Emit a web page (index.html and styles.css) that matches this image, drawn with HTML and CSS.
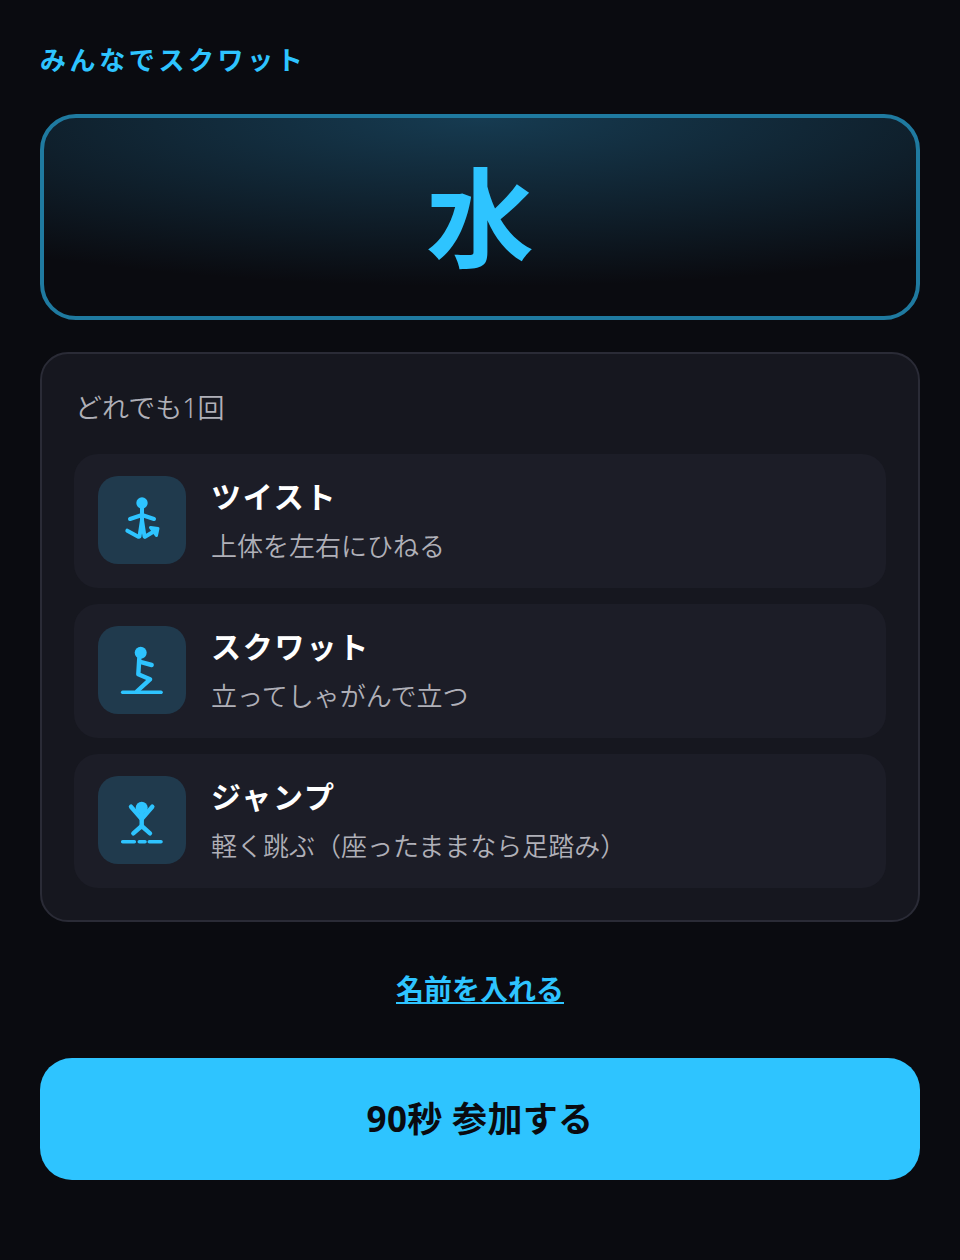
FILE: index.html
```html
<!DOCTYPE html>
<html lang="ja">
<head>
    <meta charset="UTF-8">
    <meta name="viewport" content="width=device-width, initial-scale=1.0">
    <title>みんなでスクワット</title>
    <link rel="stylesheet" href="styles.css">
</head>
<body>
    <main class="page">
        <p class="eyebrow">みんなでスクワット</p>

        <div class="day-card">
            <span class="day-kanji">水</span>
        </div>

        <section class="menu-card">
            <p class="menu-label">どれでも1回</p>

            <div class="move">
                <div class="move-icon">
                    <svg viewBox="0 0 48 48" width="48" height="48" fill="none" stroke="#2ec4ff" stroke-width="4" stroke-linecap="round" stroke-linejoin="round">
                        <circle cx="24" cy="7" r="5.700" fill="#2ec4ff" stroke="none"/>
                        <path d="M24 11v13"/>
                        <path d="M12 23l12-4 12 4"/>
                        <path d="M24 24l-2.500 16.500M24 24l2.500 16.500"/>
                        <path d="M9.300 34.700l11 6"/>
                        <path d="M27 40.700l11.700-7"/>
                        <path d="M32.500 31.500l7.500 1-1.500 7z" fill="#2ec4ff" stroke-width="3"/>
                    </svg>
                </div>
                <div class="move-text">
                    <h3 class="move-name">ツイスト</h3>
                    <p class="move-desc">上体を左右にひねる</p>
                </div>
            </div>

            <div class="move">
                <div class="move-icon">
                    <svg viewBox="0 0 48 48" width="48" height="48" fill="none" stroke="#2ec4ff" stroke-width="4.400" stroke-linecap="round" stroke-linejoin="round">
                        <circle cx="22.700" cy="6.700" r="6" fill="#2ec4ff" stroke="none"/>
                        <path d="M21.300 12l-1 16.300 11.700 5-12.700 11.700"/>
                        <path d="M21.300 15.700l12.400 3.300"/>
                        <path d="M4.700 46.300h38.300" stroke-width="3.600"/>
                    </svg>
                </div>
                <div class="move-text">
                    <h3 class="move-name">スクワット</h3>
                    <p class="move-desc">立ってしゃがんで立つ</p>
                </div>
            </div>

            <div class="move">
                <div class="move-icon">
                    <svg viewBox="0 0 48 48" width="48" height="48" fill="none" stroke="#2ec4ff" stroke-width="4.400" stroke-linecap="round" stroke-linejoin="round">
                        <circle cx="23.700" cy="11.700" r="6" fill="#2ec4ff" stroke="none"/>
                        <path d="M13 10.700l10.700 12.300 10.600-12.300"/>
                        <path d="M23.700 16v14.700"/>
                        <path d="M15.300 37.300l8.400-7.300 8.300 7.300"/>
                        <path d="M4.700 45.700h11.600M21.300 45.700h5.700M31.300 45.700h11.700" stroke-width="3.600"/>
                    </svg>
                </div>
                <div class="move-text">
                    <h3 class="move-name">ジャンプ</h3>
                    <p class="move-desc">軽く跳ぶ（座ったままなら足踏み）</p>
                </div>
            </div>
        </section>

        <a class="name-link" href="#">名前を入れる</a>

        <button class="join-btn" type="button">90秒 参加する</button>
    </main>
</body>
</html>
```

FILE: styles.css
```css
* {
    box-sizing: border-box;
}

body {
    margin: 0;
    background-color: #0a0b10;
    font-family: 'Noto Sans', 'Noto Sans CJK JP', sans-serif;
    color: #ffffff;
}

.page {
    display: flex;
    flex-direction: column;
    height: 1260px;
    padding: 40px;
}

.eyebrow {
    margin: 0;
    height: 40px;
    color: #2ec4ff;
    font-size: 26px;
    font-weight: 700;
    line-height: 40px;
    letter-spacing: 3.6px;
}

.day-card {
    display: flex;
    align-items: center;
    justify-content: center;
    height: 206px;
    margin-top: 34px;
    padding-top: 2px;
    border: 4px solid #1f7aa0;
    border-radius: 36px;
    background: radial-gradient(ellipse 90% 85% at 50% 0%, #163b51 0%, #0a0b10 100%);
}

.day-kanji {
    color: #2ec4ff;
    font-size: 108px;
    font-weight: 700;
    line-height: 1;
}

.menu-card {
    display: flex;
    flex-direction: column;
    gap: 16px;
    height: 570px;
    margin-top: 32px;
    padding: 32px;
    border: 2px solid #2a2b36;
    border-radius: 28px;
    background-color: #16171f;
}

.menu-label {
    margin: 0 0 12px 1px;
    padding-top: 2px;
    height: 40px;
    color: #b0b0b8;
    font-size: 27px;
    font-weight: 350;
    line-height: 40px;
}

.move {
    display: flex;
    align-items: flex-start;
    gap: 25px;
    height: 134px;
    padding: 22px 24px 24px;
    border-radius: 24px;
    background-color: #1c1d27;
}

.move-icon {
    display: flex;
    align-items: center;
    justify-content: center;
    flex: none;
    width: 88px;
    height: 88px;
    border-radius: 20px;
    background-color: #203a4d;
}

.move-text {
    padding-top: 1px;
}

.move-name {
    margin: 0;
    font-size: 30px;
    font-weight: 700;
    line-height: 40px;
    letter-spacing: 1.8px;
}

.move-desc {
    margin: 9px 0 0;
    color: #b0b0b8;
    font-size: 26px;
    font-weight: 350;
    line-height: 40px;
}

.name-link {
    align-self: center;
    margin-top: 45px;
    color: #2ec4ff;
    font-size: 28px;
    font-weight: 700;
    line-height: 44px;
}

.join-btn {
    height: 122px;
    margin-top: 47px;
    padding-bottom: 6px;
    border: none;
    border-radius: 32px;
    background-color: #2ec4ff;
    color: #0a0b10;
    font-family: inherit;
    font-size: 35px;
    font-weight: 700;
    letter-spacing: 0.35px;
    cursor: pointer;
}
```
